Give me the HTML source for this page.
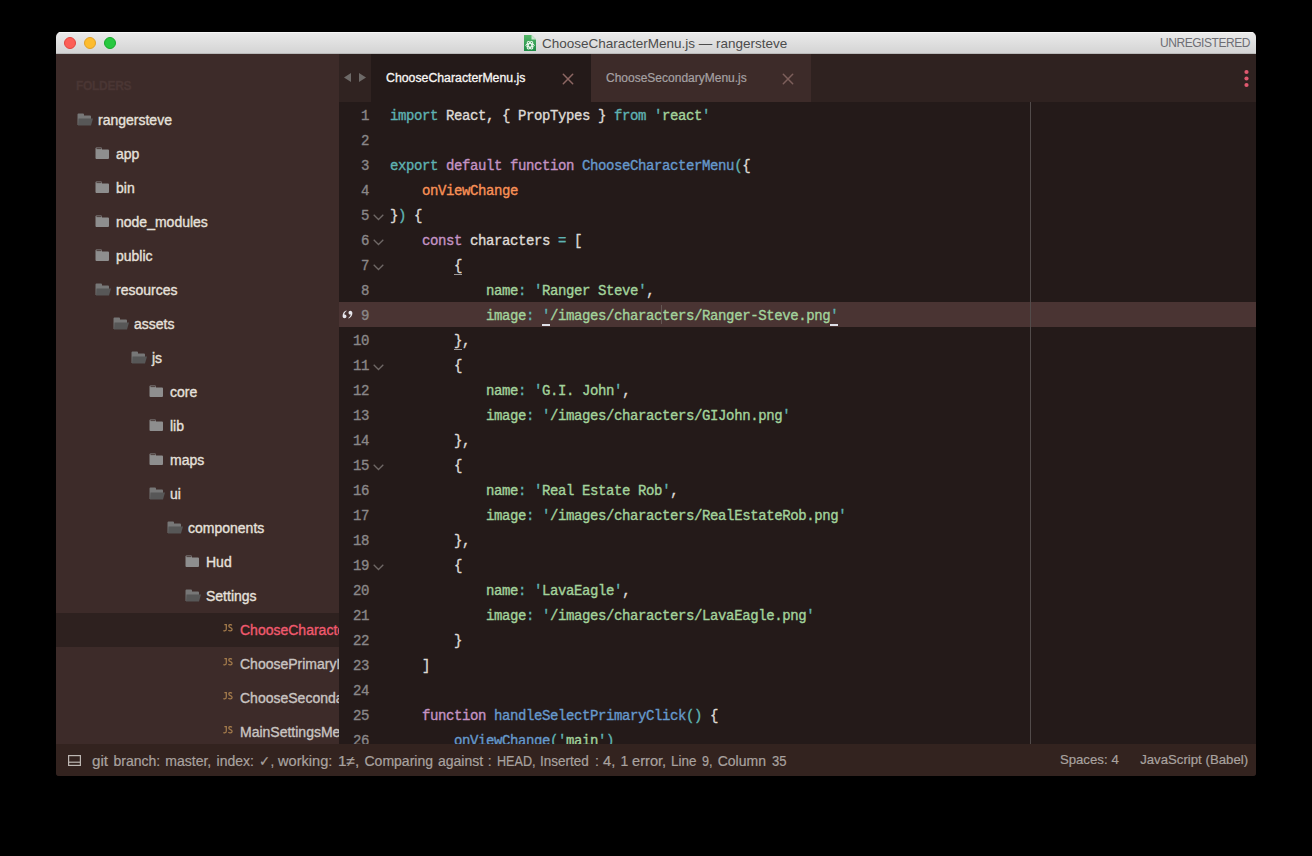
<!DOCTYPE html>
<html><head><meta charset="utf-8"><style>
*{margin:0;padding:0;box-sizing:border-box}
html,body{width:1312px;height:856px;background:#000;overflow:hidden}
body{position:relative;font-family:"Liberation Sans",sans-serif}
#win{position:absolute;left:56px;top:32px;width:1200px;height:744px;border-radius:5px 5px 3px 3px;overflow:hidden;background:#241a19}
#title{position:absolute;left:0;top:0;width:1200px;height:22px;background:linear-gradient(#ebebeb,#d3d3d3);box-shadow:inset 0 1px 0 #f7f7f7,inset 0 -1px 0 #b9b9b9}
.tl{position:absolute;top:5px;width:12px;height:12px;border-radius:50%}
#ttext{position:absolute;left:486px;top:4px;font-size:13.5px;color:#4c4c4c;line-height:16px;white-space:nowrap}
#unreg{position:absolute;left:1104px;top:2.8px;font-size:12px;color:#6e6e74;line-height:16px;letter-spacing:-0.45px}
#side{position:absolute;left:0;top:22px;width:283px;height:690px;background:#3d2b29;overflow:hidden}
#folders{position:absolute;left:20px;top:24px;font-size:12px;font-weight:bold;color:#4a3634;line-height:16px;letter-spacing:-0.3px;-webkit-text-stroke:0.3px}
.row{position:absolute;left:0;width:283px;height:34px;line-height:34px;font-size:14px;color:#e6e1dc;white-space:nowrap;-webkit-text-stroke:0.35px}
.row.sel{background:#2e211f}
.row .t{position:absolute;top:0}
.row .file{color:#c9c4c1}
.row.sel .file{color:#f05a6e}
.row .js{position:absolute;left:167px;top:0;font-size:9.5px;font-weight:bold;color:#a57c4c;line-height:28px;letter-spacing:-0.6px;-webkit-text-stroke:0}
.row svg{position:absolute}
#tabbar{position:absolute;left:283px;top:22px;width:917px;height:48px;background:#2f2220}
#arrows{position:absolute;left:0;top:0;width:32px;height:48px;background:#302321}
.tab{position:absolute;top:0;height:48px;font-size:12px;line-height:48px;white-space:nowrap}
.tab.active{left:32px;width:220px;background:#241a19;color:#f8f6f4;font-size:12.3px;-webkit-text-stroke:0.3px}
.tab.inactive{left:252px;width:220px;height:48px;background:#3d2b29;color:#a5a1a3;-webkit-text-stroke:0.2px}
.tab .tt{position:absolute;left:15px;top:0}
.tab .x{position:absolute;top:18.5px}
#dots{position:absolute;left:905.5px;top:16px}
#dots i{position:absolute;left:0;width:4px;height:4px;border-radius:50%;background:#e0596f}
#editor{position:absolute;left:283px;top:70px;width:917px;height:642px;background:#241a19;overflow:hidden}
#ruler{position:absolute;left:691px;top:0;width:1px;height:642px;background:#524b4a;z-index:2}
.ln{position:absolute;left:0;width:917px;height:25px;font-family:"Liberation Mono",monospace;font-size:14px;letter-spacing:-0.4px;line-height:25px;white-space:pre;-webkit-text-stroke:0.35px}
.ln.hl{background:#4a3433}
.num{position:absolute;left:0;top:2px;width:30px;text-align:right;color:#8a8788}
.chev{position:absolute;left:34px;top:12.3px}
.gi{position:absolute;left:2.5px;top:8px}
.code{position:absolute;left:51px;top:2px;color:#dfdad6}
.k{color:#5fb3b3}.p{color:#c594c5}.f{color:#6699cc}.o{color:#f99157}.s{color:#a3d39c}.w{color:#dfdad6}
.ul{position:absolute;width:8px;height:2px;background:#dfe0e8}
.ul.b{height:1px;background:#9d9896}
#cursor{position:absolute;width:1px;height:19px;background:#645754;z-index:2}
#status{position:absolute;left:0;top:712px;width:1200px;height:32px;background:#33231f;color:#a9a29f;font-size:14px;line-height:32px;white-space:nowrap}
.sw{position:absolute;top:0.5px;-webkit-text-stroke:0.2px;transform-origin:0 50%}
.row svg.jsi{left:167px;top:10.5px}

</style></head><body>
<div id="win">
<div id="title"><div class="tl" style="left:8px;background:#fc5f57;border:1px solid #e2463f"></div>
<div class="tl" style="left:28px;background:#fdbc2e;border:1px solid #e0a028"></div>
<div class="tl" style="left:48px;background:#28c840;border:1px solid #17a92a"></div>
<svg style="position:absolute;left:468px;top:3px" width="12" height="16" viewBox="0 0 12 16"><defs><linearGradient id="gg" x1="0" y1="0" x2="0" y2="1"><stop offset="0" stop-color="#56b86a"/><stop offset="1" stop-color="#1e8b45"/></linearGradient></defs><path d="M0 0H7.5L12 4.5V16H0Z" fill="url(#gg)"/><path d="M7.5 0L12 4.5H7.5Z" fill="#c9e8cf"/><g fill="none" stroke="#eef8f0" stroke-width="1"><ellipse cx="6" cy="10.3" rx="4.2" ry="1.8"/><ellipse cx="6" cy="10.3" rx="4.2" ry="1.8" transform="rotate(60 6 10.3)"/><ellipse cx="6" cy="10.3" rx="4.2" ry="1.8" transform="rotate(-60 6 10.3)"/></g></svg>
<div id="ttext">ChooseCharacterMenu.js — rangersteve</div>
<div id="unreg">UNREGISTERED</div></div>
<div id="side"><div id="folders">FOLDERS</div><div class="row" style="top:49px"><svg style="left:21px;top:10px" width="17" height="13" viewBox="0 0 17 13"><path d="M0.5 1.5Q0.5 0.5 1.5 0.5H6Q7 0.5 7 1.5V2.5H13Q14 2.5 14 3.5V12H0.5Z" fill="#777"/><path d="M1.5 5.5H16L14 12.5H1Z" fill="#575757"/></svg><span class="t" style="left:42px">rangersteve</span></div><div class="row" style="top:83px"><svg style="left:39px;top:10px" width="15" height="12" viewBox="0 0 15 12"><path d="M0.5 1.5Q0.5 0.5 1.5 0.5H6Q7 0.5 7 1.5V2.5H13Q14 2.5 14 3.5V11Q14 12 13 12H1.5Q0.5 12 0.5 11Z" fill="#8e8e8e"/><rect x="1.5" y="1.2" width="5" height="0.9" fill="#3d2b29" opacity="0.9"/></svg><span class="t" style="left:60px">app</span></div><div class="row" style="top:117px"><svg style="left:39px;top:10px" width="15" height="12" viewBox="0 0 15 12"><path d="M0.5 1.5Q0.5 0.5 1.5 0.5H6Q7 0.5 7 1.5V2.5H13Q14 2.5 14 3.5V11Q14 12 13 12H1.5Q0.5 12 0.5 11Z" fill="#8e8e8e"/><rect x="1.5" y="1.2" width="5" height="0.9" fill="#3d2b29" opacity="0.9"/></svg><span class="t" style="left:60px">bin</span></div><div class="row" style="top:151px"><svg style="left:39px;top:10px" width="15" height="12" viewBox="0 0 15 12"><path d="M0.5 1.5Q0.5 0.5 1.5 0.5H6Q7 0.5 7 1.5V2.5H13Q14 2.5 14 3.5V11Q14 12 13 12H1.5Q0.5 12 0.5 11Z" fill="#8e8e8e"/><rect x="1.5" y="1.2" width="5" height="0.9" fill="#3d2b29" opacity="0.9"/></svg><span class="t" style="left:60px">node_modules</span></div><div class="row" style="top:185px"><svg style="left:39px;top:10px" width="15" height="12" viewBox="0 0 15 12"><path d="M0.5 1.5Q0.5 0.5 1.5 0.5H6Q7 0.5 7 1.5V2.5H13Q14 2.5 14 3.5V11Q14 12 13 12H1.5Q0.5 12 0.5 11Z" fill="#8e8e8e"/><rect x="1.5" y="1.2" width="5" height="0.9" fill="#3d2b29" opacity="0.9"/></svg><span class="t" style="left:60px">public</span></div><div class="row" style="top:219px"><svg style="left:39px;top:10px" width="17" height="13" viewBox="0 0 17 13"><path d="M0.5 1.5Q0.5 0.5 1.5 0.5H6Q7 0.5 7 1.5V2.5H13Q14 2.5 14 3.5V12H0.5Z" fill="#777"/><path d="M1.5 5.5H16L14 12.5H1Z" fill="#575757"/></svg><span class="t" style="left:60px">resources</span></div><div class="row" style="top:253px"><svg style="left:57px;top:10px" width="17" height="13" viewBox="0 0 17 13"><path d="M0.5 1.5Q0.5 0.5 1.5 0.5H6Q7 0.5 7 1.5V2.5H13Q14 2.5 14 3.5V12H0.5Z" fill="#777"/><path d="M1.5 5.5H16L14 12.5H1Z" fill="#575757"/></svg><span class="t" style="left:78px">assets</span></div><div class="row" style="top:287px"><svg style="left:75px;top:10px" width="17" height="13" viewBox="0 0 17 13"><path d="M0.5 1.5Q0.5 0.5 1.5 0.5H6Q7 0.5 7 1.5V2.5H13Q14 2.5 14 3.5V12H0.5Z" fill="#777"/><path d="M1.5 5.5H16L14 12.5H1Z" fill="#575757"/></svg><span class="t" style="left:96px">js</span></div><div class="row" style="top:321px"><svg style="left:93px;top:10px" width="15" height="12" viewBox="0 0 15 12"><path d="M0.5 1.5Q0.5 0.5 1.5 0.5H6Q7 0.5 7 1.5V2.5H13Q14 2.5 14 3.5V11Q14 12 13 12H1.5Q0.5 12 0.5 11Z" fill="#8e8e8e"/><rect x="1.5" y="1.2" width="5" height="0.9" fill="#3d2b29" opacity="0.9"/></svg><span class="t" style="left:114px">core</span></div><div class="row" style="top:355px"><svg style="left:93px;top:10px" width="15" height="12" viewBox="0 0 15 12"><path d="M0.5 1.5Q0.5 0.5 1.5 0.5H6Q7 0.5 7 1.5V2.5H13Q14 2.5 14 3.5V11Q14 12 13 12H1.5Q0.5 12 0.5 11Z" fill="#8e8e8e"/><rect x="1.5" y="1.2" width="5" height="0.9" fill="#3d2b29" opacity="0.9"/></svg><span class="t" style="left:114px">lib</span></div><div class="row" style="top:389px"><svg style="left:93px;top:10px" width="15" height="12" viewBox="0 0 15 12"><path d="M0.5 1.5Q0.5 0.5 1.5 0.5H6Q7 0.5 7 1.5V2.5H13Q14 2.5 14 3.5V11Q14 12 13 12H1.5Q0.5 12 0.5 11Z" fill="#8e8e8e"/><rect x="1.5" y="1.2" width="5" height="0.9" fill="#3d2b29" opacity="0.9"/></svg><span class="t" style="left:114px">maps</span></div><div class="row" style="top:423px"><svg style="left:93px;top:10px" width="17" height="13" viewBox="0 0 17 13"><path d="M0.5 1.5Q0.5 0.5 1.5 0.5H6Q7 0.5 7 1.5V2.5H13Q14 2.5 14 3.5V12H0.5Z" fill="#777"/><path d="M1.5 5.5H16L14 12.5H1Z" fill="#575757"/></svg><span class="t" style="left:114px">ui</span></div><div class="row" style="top:457px"><svg style="left:111px;top:10px" width="17" height="13" viewBox="0 0 17 13"><path d="M0.5 1.5Q0.5 0.5 1.5 0.5H6Q7 0.5 7 1.5V2.5H13Q14 2.5 14 3.5V12H0.5Z" fill="#777"/><path d="M1.5 5.5H16L14 12.5H1Z" fill="#575757"/></svg><span class="t" style="left:132px">components</span></div><div class="row" style="top:491px"><svg style="left:129px;top:10px" width="15" height="12" viewBox="0 0 15 12"><path d="M0.5 1.5Q0.5 0.5 1.5 0.5H6Q7 0.5 7 1.5V2.5H13Q14 2.5 14 3.5V11Q14 12 13 12H1.5Q0.5 12 0.5 11Z" fill="#8e8e8e"/><rect x="1.5" y="1.2" width="5" height="0.9" fill="#3d2b29" opacity="0.9"/></svg><span class="t" style="left:150px">Hud</span></div><div class="row" style="top:525px"><svg style="left:129px;top:10px" width="17" height="13" viewBox="0 0 17 13"><path d="M0.5 1.5Q0.5 0.5 1.5 0.5H6Q7 0.5 7 1.5V2.5H13Q14 2.5 14 3.5V12H0.5Z" fill="#777"/><path d="M1.5 5.5H16L14 12.5H1Z" fill="#575757"/></svg><span class="t" style="left:150px">Settings</span></div><div class="row sel" style="top:559px"><svg class="jsi" width="10" height="8" viewBox="0 0 10 8"><path d="M1.4 0.7H3.3V5.1Q3.3 6.9 1.8 6.9Q0.9 6.9 0.5 6.3M8.9 1.3Q8.3 0.6 7.3 0.6Q5.8 0.6 5.8 2Q5.8 3.1 7.4 3.6Q9.1 4.1 9.1 5.3Q9.1 6.9 7.3 6.9Q6.1 6.9 5.4 6.1" fill="none" stroke="#a57c4c" stroke-width="1.25"/></svg><span class="t file" style="left:184px">ChooseCharacterMenu.js</span></div><div class="row" style="top:593px"><svg class="jsi" width="10" height="8" viewBox="0 0 10 8"><path d="M1.4 0.7H3.3V5.1Q3.3 6.9 1.8 6.9Q0.9 6.9 0.5 6.3M8.9 1.3Q8.3 0.6 7.3 0.6Q5.8 0.6 5.8 2Q5.8 3.1 7.4 3.6Q9.1 4.1 9.1 5.3Q9.1 6.9 7.3 6.9Q6.1 6.9 5.4 6.1" fill="none" stroke="#a57c4c" stroke-width="1.25"/></svg><span class="t file" style="left:184px">ChoosePrimaryMenu.js</span></div><div class="row" style="top:627px"><svg class="jsi" width="10" height="8" viewBox="0 0 10 8"><path d="M1.4 0.7H3.3V5.1Q3.3 6.9 1.8 6.9Q0.9 6.9 0.5 6.3M8.9 1.3Q8.3 0.6 7.3 0.6Q5.8 0.6 5.8 2Q5.8 3.1 7.4 3.6Q9.1 4.1 9.1 5.3Q9.1 6.9 7.3 6.9Q6.1 6.9 5.4 6.1" fill="none" stroke="#a57c4c" stroke-width="1.25"/></svg><span class="t file" style="left:184px">ChooseSecondaryMenu.js</span></div><div class="row" style="top:661px"><svg class="jsi" width="10" height="8" viewBox="0 0 10 8"><path d="M1.4 0.7H3.3V5.1Q3.3 6.9 1.8 6.9Q0.9 6.9 0.5 6.3M8.9 1.3Q8.3 0.6 7.3 0.6Q5.8 0.6 5.8 2Q5.8 3.1 7.4 3.6Q9.1 4.1 9.1 5.3Q9.1 6.9 7.3 6.9Q6.1 6.9 5.4 6.1" fill="none" stroke="#a57c4c" stroke-width="1.25"/></svg><span class="t file" style="left:184px">MainSettingsMenu.js</span></div></div>
<div id="tabbar"><div id="arrows"><svg width="32" height="48" viewBox="0 0 32 48"><path d="M5 23.5L12 19V28Z" fill="#6d6a68"/><path d="M20 19L27 23.5L20 28Z" fill="#6d6a68"/></svg></div>
<div class="tab active"><span class="tt">ChooseCharacterMenu.js</span><svg class="x" style="left:191px" width="12" height="12" viewBox="0 0 12 12"><path d="M1.3 1.3L10.7 10.7M10.7 1.3L1.3 10.7" stroke="#8d6763" stroke-width="1.5" stroke-linecap="round"/></svg></div>
<div class="tab inactive"><span class="tt">ChooseSecondaryMenu.js</span><svg class="x" style="left:191px" width="12" height="12" viewBox="0 0 12 12"><path d="M1.3 1.3L10.7 10.7M10.7 1.3L1.3 10.7" stroke="#7d5f5b" stroke-width="1.5" stroke-linecap="round"/></svg></div>
<svg style="position:absolute;left:903px;top:14px" width="8" height="20" viewBox="0 0 8 20"><g fill="#e0596f"><circle cx="4.5" cy="4" r="2.1"/><circle cx="4.5" cy="10.5" r="2.1"/><circle cx="4.5" cy="17" r="2.1"/></g></svg></div>
<div id="editor"><div id="ruler"></div><div class="ln" style="top:0px"><span class="num">1</span><span class="code"><span class="k">import</span><span class="w"> React, { PropTypes } </span><span class="k">from</span><span class="w"> </span><span class="k">&#x27;</span><span class="s">react</span><span class="k">&#x27;</span></span></div><div class="ln" style="top:25px"><span class="num">2</span><span class="code"></span></div><div class="ln" style="top:50px"><span class="num">3</span><span class="code"><span class="k">export</span><span class="w"> </span><span class="p">default</span><span class="w"> </span><span class="p">function</span><span class="w"> </span><span class="f">ChooseCharacterMenu</span><span class="k">(</span><span class="w">{</span></span></div><div class="ln" style="top:75px"><span class="num">4</span><span class="code"><span class="w">    </span><span class="o">onViewChange</span></span></div><div class="ln" style="top:100px"><span class="num">5</span><svg class="chev" width="11" height="7" viewBox="0 0 11 7"><path d="M0.7 0.7L5.5 5.5L10.3 0.7" fill="none" stroke="#6f6866" stroke-width="1.3"/></svg><span class="code"><span class="w">}</span><span class="k">)</span><span class="w"> {</span></span></div><div class="ln" style="top:125px"><span class="num">6</span><svg class="chev" width="11" height="7" viewBox="0 0 11 7"><path d="M0.7 0.7L5.5 5.5L10.3 0.7" fill="none" stroke="#6f6866" stroke-width="1.3"/></svg><span class="code"><span class="w">    </span><span class="p">const</span><span class="w"> characters </span><span class="k">=</span><span class="w"> [</span></span></div><div class="ln" style="top:150px"><span class="num">7</span><svg class="chev" width="11" height="7" viewBox="0 0 11 7"><path d="M0.7 0.7L5.5 5.5L10.3 0.7" fill="none" stroke="#6f6866" stroke-width="1.3"/></svg><span class="code"><span class="w">        </span><span class="w">{</span></span></div><div class="ln" style="top:175px"><span class="num">8</span><span class="code"><span class="w">            </span><span class="s">name</span><span class="k">:</span><span class="w"> </span><span class="k">'</span><span class="s">Ranger Steve</span><span class="k">'</span><span class="w">,</span></span></div><div class="ln hl" style="top:200px"><span class="num">9</span><svg class="gi" width="11" height="9" viewBox="0 0 11 9"><path d="M4.3 0.6C2 1.5 0.6 3.5 0.6 6C0.6 7.3 1.5 8.3 2.6 8.3C3.7 8.3 4.5 7.4 4.5 6.3C4.5 5.2 3.7 4.4 2.7 4.4C2.5 4.4 2.3 4.4 2.2 4.5C2.6 3 3.4 1.8 4.7 1.1Z" fill="#e8e8ee"/><path d="M6.7 8.4C9 7.5 10.4 5.5 10.4 3C10.4 1.7 9.5 0.7 8.4 0.7C7.3 0.7 6.5 1.6 6.5 2.7C6.5 3.8 7.3 4.6 8.3 4.6C8.5 4.6 8.7 4.6 8.8 4.5C8.4 6 7.6 7.2 6.3 7.9Z" fill="#e8e8ee"/></svg><span class="code"><span class="w">            </span><span class="s">image</span><span class="k">:</span><span class="w"> </span><span class="k">'</span><span class="s">/images/characters/Ranger-Steve.png</span><span class="k">'</span></span></div><div class="ln" style="top:225px"><span class="num">10</span><span class="code"><span class="w">        },</span></span></div><div class="ln" style="top:250px"><span class="num">11</span><svg class="chev" width="11" height="7" viewBox="0 0 11 7"><path d="M0.7 0.7L5.5 5.5L10.3 0.7" fill="none" stroke="#6f6866" stroke-width="1.3"/></svg><span class="code"><span class="w">        {</span></span></div><div class="ln" style="top:275px"><span class="num">12</span><span class="code"><span class="w">            </span><span class="s">name</span><span class="k">:</span><span class="w"> </span><span class="k">'</span><span class="s">G.I. John</span><span class="k">'</span><span class="w">,</span></span></div><div class="ln" style="top:300px"><span class="num">13</span><span class="code"><span class="w">            </span><span class="s">image</span><span class="k">:</span><span class="w"> </span><span class="k">'</span><span class="s">/images/characters/GIJohn.png</span><span class="k">'</span></span></div><div class="ln" style="top:325px"><span class="num">14</span><span class="code"><span class="w">        },</span></span></div><div class="ln" style="top:350px"><span class="num">15</span><svg class="chev" width="11" height="7" viewBox="0 0 11 7"><path d="M0.7 0.7L5.5 5.5L10.3 0.7" fill="none" stroke="#6f6866" stroke-width="1.3"/></svg><span class="code"><span class="w">        {</span></span></div><div class="ln" style="top:375px"><span class="num">16</span><span class="code"><span class="w">            </span><span class="s">name</span><span class="k">:</span><span class="w"> </span><span class="k">'</span><span class="s">Real Estate Rob</span><span class="k">'</span><span class="w">,</span></span></div><div class="ln" style="top:400px"><span class="num">17</span><span class="code"><span class="w">            </span><span class="s">image</span><span class="k">:</span><span class="w"> </span><span class="k">'</span><span class="s">/images/characters/RealEstateRob.png</span><span class="k">'</span></span></div><div class="ln" style="top:425px"><span class="num">18</span><span class="code"><span class="w">        },</span></span></div><div class="ln" style="top:450px"><span class="num">19</span><svg class="chev" width="11" height="7" viewBox="0 0 11 7"><path d="M0.7 0.7L5.5 5.5L10.3 0.7" fill="none" stroke="#6f6866" stroke-width="1.3"/></svg><span class="code"><span class="w">        {</span></span></div><div class="ln" style="top:475px"><span class="num">20</span><span class="code"><span class="w">            </span><span class="s">name</span><span class="k">:</span><span class="w"> </span><span class="k">'</span><span class="s">LavaEagle</span><span class="k">'</span><span class="w">,</span></span></div><div class="ln" style="top:500px"><span class="num">21</span><span class="code"><span class="w">            </span><span class="s">image</span><span class="k">:</span><span class="w"> </span><span class="k">'</span><span class="s">/images/characters/LavaEagle.png</span><span class="k">'</span></span></div><div class="ln" style="top:525px"><span class="num">22</span><span class="code"><span class="w">        }</span></span></div><div class="ln" style="top:550px"><span class="num">23</span><span class="code"><span class="w">    ]</span></span></div><div class="ln" style="top:575px"><span class="num">24</span><span class="code"></span></div><div class="ln" style="top:600px"><span class="num">25</span><span class="code"><span class="w">    </span><span class="p">function</span><span class="w"> </span><span class="f">handleSelectPrimaryClick</span><span class="k">()</span><span class="w"> {</span></span></div><div class="ln" style="top:625px"><span class="num">26</span><span class="code"><span class="w">        </span><span class="f">onViewChange</span><span class="k">(</span><span class="k">'</span><span class="s">main</span><span class="k">'</span><span class="k">)</span></span></div><div class="ul" style="left:203px;top:222px"></div><div class="ul" style="left:491px;top:222px"></div><div class="ul b" style="left:115px;top:172px"></div><div class="ul b" style="left:115px;top:247px"></div><div id="cursor" style="left:322px;top:203px"></div></div>
<div id="status"><svg style="position:absolute;left:12px;top:11px" width="13" height="11" viewBox="0 0 13 11"><rect x="0.6" y="0.6" width="11.8" height="9.8" fill="none" stroke="#bdb7b3" stroke-width="1.2"/><path d="M0.6 7.2H12.4" stroke="#bdb7b3" stroke-width="1.2"/></svg><span class="sw" style="left:36.2px;font-size:14px;transform:scaleX(1.087)">git</span><span class="sw" style="left:57.5px">branch:</span><span class="sw" style="left:109.3px">master,</span><span class="sw" style="left:160.6px">index:</span><span class="sw" style="left:203.4px;font-size:14px;transform:scaleX(0.95)">✓,</span><span class="sw" style="left:221.7px;font-size:14px;transform:scaleX(1.042)">working:</span><span class="sw" style="left:281.9px;font-size:14px;transform:scaleX(1.1)">1≠,</span><span class="sw" style="left:308.5px">Comparing</span><span class="sw" style="left:382.0px">against</span><span class="sw" style="left:431.8px">:</span><span class="sw" style="left:440.5px;font-size:14px;transform:scaleX(0.9)">HEAD,</span><span class="sw" style="left:484.1px;font-size:14px;transform:scaleX(0.963)">Inserted</span><span class="sw" style="left:539.0px">:</span><span class="sw" style="left:547.0px;font-size:14px;transform:scaleX(1.05)">4,</span><span class="sw" style="left:564.6px">1</span><span class="sw" style="left:575.7px;font-size:14px;transform:scaleX(1.045)">error,</span><span class="sw" style="left:615.2px;font-size:14px;transform:scaleX(0.963)">Line</span><span class="sw" style="left:646.2px;font-size:14px;transform:scaleX(0.9)">9,</span><span class="sw" style="left:661.7px">Column</span><span class="sw" style="left:715.6px;font-size:14px;transform:scaleX(0.93)">35</span><span class="sw" style="left:1003.9px;font-size:13.2px;top:-0.5px">Spaces:</span><span class="sw" style="left:1055.4px;font-size:13.2px;top:-0.5px">4</span><span class="sw" style="left:1084.2px;font-size:13.2px;top:-0.5px">JavaScript</span><span class="sw" style="left:1149.6px;font-size:13.2px;top:-0.5px">(Babel)</span></div>
</div>
</body></html>
